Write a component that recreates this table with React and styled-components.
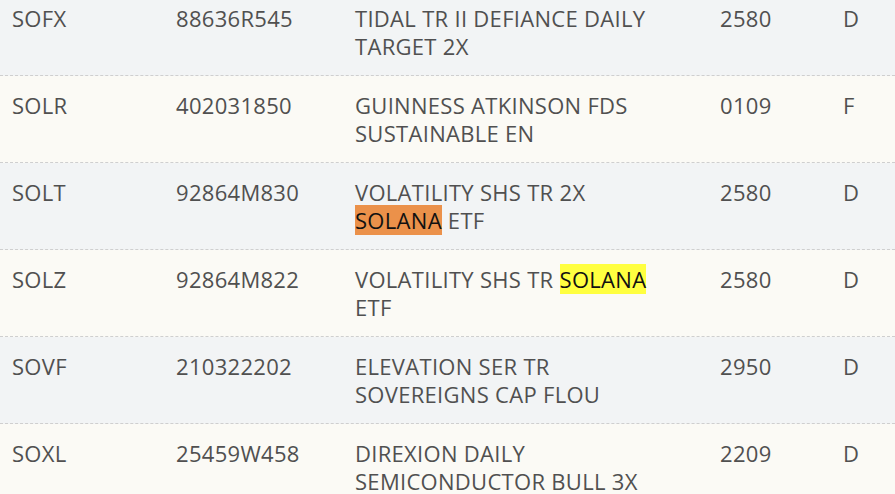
import React from "react";
import styled, { createGlobalStyle } from "styled-components";

const GlobalStyle = createGlobalStyle`
  html, body {
    margin: 0;
    padding: 0;
    background: #fbfaf5;
    overflow: hidden;
  }
`;

const Table = styled.div`
  width: 895px;
  margin-top: -11px;
  font-family: "Open Sans", "DejaVu Sans", sans-serif;
  font-size: 22px;
  letter-spacing: 0.3px;
  color: #505050;
`;

const Row = styled.div`
  display: grid;
  grid-template-columns: 164px 179px 365px 123px 1fr;
  height: 87px;
  box-sizing: border-box;
  padding: 15px 0 0 12px;
  line-height: 28px;
  background: ${(p) => (p.$shaded ? "#f2f4f5" : "#fbfaf5")};
  border-bottom: 1px dashed #cfcfcf;
`;

const Cell = styled.div`
  white-space: pre-line;
`;

const Mark = styled.span`
  background: ${(p) => (p.$tone === "orange" ? "#eb914a" : "#ffff40")};
  color: #111;
`;

const rows = [
  ["SOFX", "88636R545", ["TIDAL TR II DEFIANCE DAILY\nTARGET 2X"], "2580", "D"],
  ["SOLR", "402031850", ["GUINNESS ATKINSON FDS\nSUSTAINABLE EN"], "0109", "F"],
  ["SOLT", "92864M830", ["VOLATILITY SHS TR 2X\n", { hl: "SOLANA", tone: "orange" }, " ETF"], "2580", "D"],
  ["SOLZ", "92864M822", ["VOLATILITY SHS TR ", { hl: "SOLANA", tone: "yellow" }, "\nETF"], "2580", "D"],
  ["SOVF", "210322202", ["ELEVATION SER TR\nSOVEREIGNS CAP FLOU"], "2950", "D"],
  ["SOXL", "25459W458", ["DIREXION DAILY\nSEMICONDUCTOR BULL 3X"], "2209", "D"],
];

export default function App() {
  return (
    <>
      <GlobalStyle />
      <Table>
        {rows.map(([sym, cusip, name, code, type], i) => (
          <Row key={sym} $shaded={i % 2 === 0}>
            <Cell>{sym}</Cell>
            <Cell>{cusip}</Cell>
            <Cell>
              {name.map((part, j) =>
                typeof part === "string" ? (
                  <React.Fragment key={j}>{part}</React.Fragment>
                ) : (
                  <Mark key={j} $tone={part.tone}>{part.hl}</Mark>
                )
              )}
            </Cell>
            <Cell>{code}</Cell>
            <Cell>{type}</Cell>
          </Row>
        ))}
      </Table>
    </>
  );
}
